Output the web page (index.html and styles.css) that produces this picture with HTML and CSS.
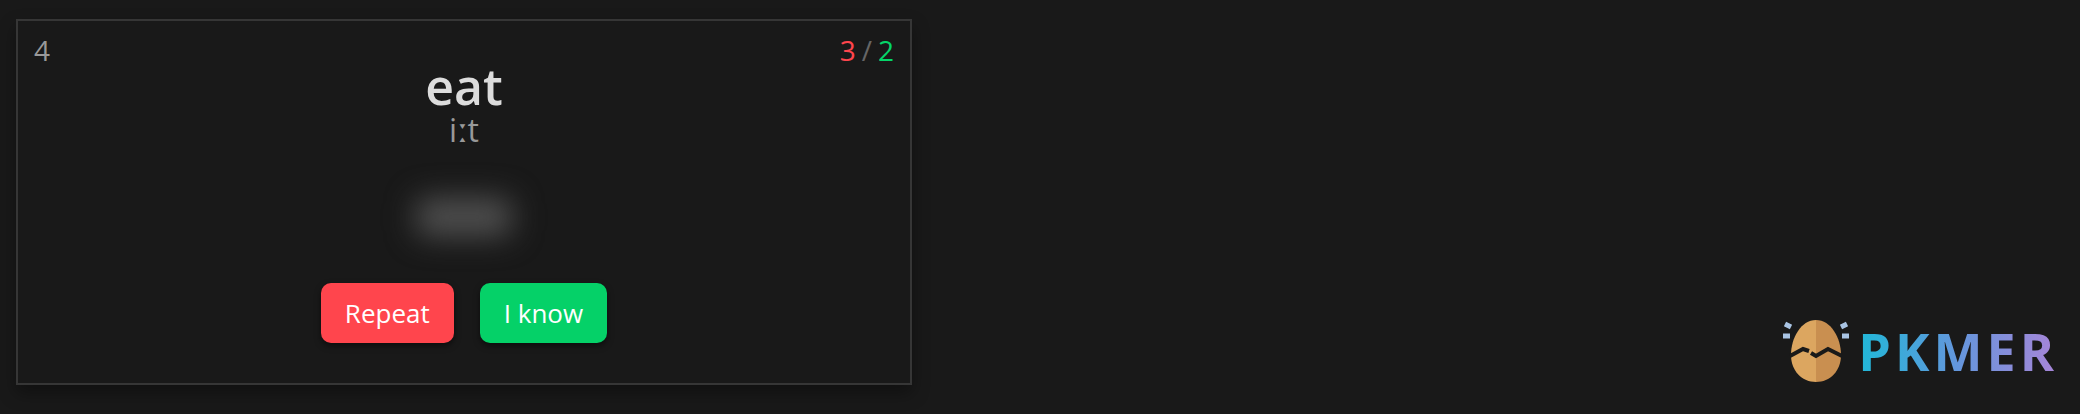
FILE: index.html
```html
<!DOCTYPE html>
<html lang="en">
<head>
<meta charset="utf-8">
<title>Flashcards</title>
<link rel="stylesheet" href="styles.css">
</head>
<body>
<main class="page">
  <article class="card">
    <header class="card-head">
      <span>4</span>
      <span class="score"><span class="missed">3</span><span class="slash">/</span><span class="known">2</span></span>
    </header>
    <h1 class="word">eat</h1>
    <p class="phonetic">iːt</p>
    <div class="answer" role="img" aria-label="Hidden answer"></div>
    <div class="actions">
      <button class="btn btn-repeat" type="button">Repeat</button>
      <button class="btn btn-know" type="button">I know</button>
    </div>
  </article>
  <div class="brand">
    <svg class="egg" viewBox="0 0 68 64" aria-hidden="true">
      <path fill="#dca660" d="M34 1C19 1 9 19 9 36c0 16 11 27 25 27z"/>
      <path fill="#c98f50" d="M34 1c15 0 25 18 25 35 0 16-11 27-25 27z"/>
      <path fill="none" stroke="#191919" stroke-width="4" d="M8 37l13-7 6 2M29 34l5 3 12-7 14 7"/>
      <path fill="none" stroke="#a9c4e3" stroke-width="5" d="M3 5l6 3M1 17h7M65 5l-6 3M67 17h-7"/>
    </svg>
    <span class="brand-name">PKMER</span>
  </div>
</main>
</body>
</html>
```
FILE: styles.css
```css
* { box-sizing: border-box; }
body {
  margin: 0;
  background: #191919;
  font-family: "Open Sans", "Noto Sans", sans-serif;
}
.page {
  display: flex;
  justify-content: space-between;
  align-items: flex-end;
  min-height: 100vh;
  padding: 19px 22px 29px 16px;
}
.card {
  display: flex;
  flex-direction: column;
  width: 44%;
  max-width: 896px;
  padding: 12px 16px 40px;
  border: 2px solid #363636;
  box-shadow: 0 8px 16px rgba(0, 0, 0, .35);
  color: #999;
  text-align: center;
}
.card-head {
  display: flex;
  justify-content: space-between;
  font-size: 28px;
  line-height: 34px;
}
.score { display: flex; gap: 6px; }
.missed { color: #ff454d; }
.slash { color: #666; }
.known { color: #05d569; }
.word {
  margin: -8px 0 0;
  color: #dcdcdc;
  font-size: 50px;
  font-weight: 600;
  line-height: 54px;
}
.phonetic {
  margin: 0;
  font-size: 32px;
  line-height: 34px;
}
.answer {
  align-self: center;
  width: 96px;
  height: 38px;
  margin: 51px 0 47px;
  border-radius: 10px;
  background: #505050;
  filter: blur(15px);
}
.actions {
  display: flex;
  justify-content: center;
  gap: 26px;
}
.btn {
  padding: 12px 24px;
  border: 0;
  border-radius: 10px;
  box-shadow: 0 3px 6px rgba(0, 0, 0, .5);
  color: #fff;
  font: 26px/36px "Open Sans", "Noto Sans", sans-serif;
}
.btn-repeat { background: #ff454d; }
.btn-know { background: #05d168; }
.brand {
  display: flex;
  align-items: center;
  gap: 8px;
  padding-bottom: 1px;
}
.egg { width: 68px; height: 64px; }
.brand-name {
  background: linear-gradient(90deg, #20b8d8, #6496dc 50%, #a885d8);
  background-clip: text;
  color: transparent;
  font-size: 52px;
  font-weight: 700;
  line-height: 66px;
  letter-spacing: 4px;
}
```
